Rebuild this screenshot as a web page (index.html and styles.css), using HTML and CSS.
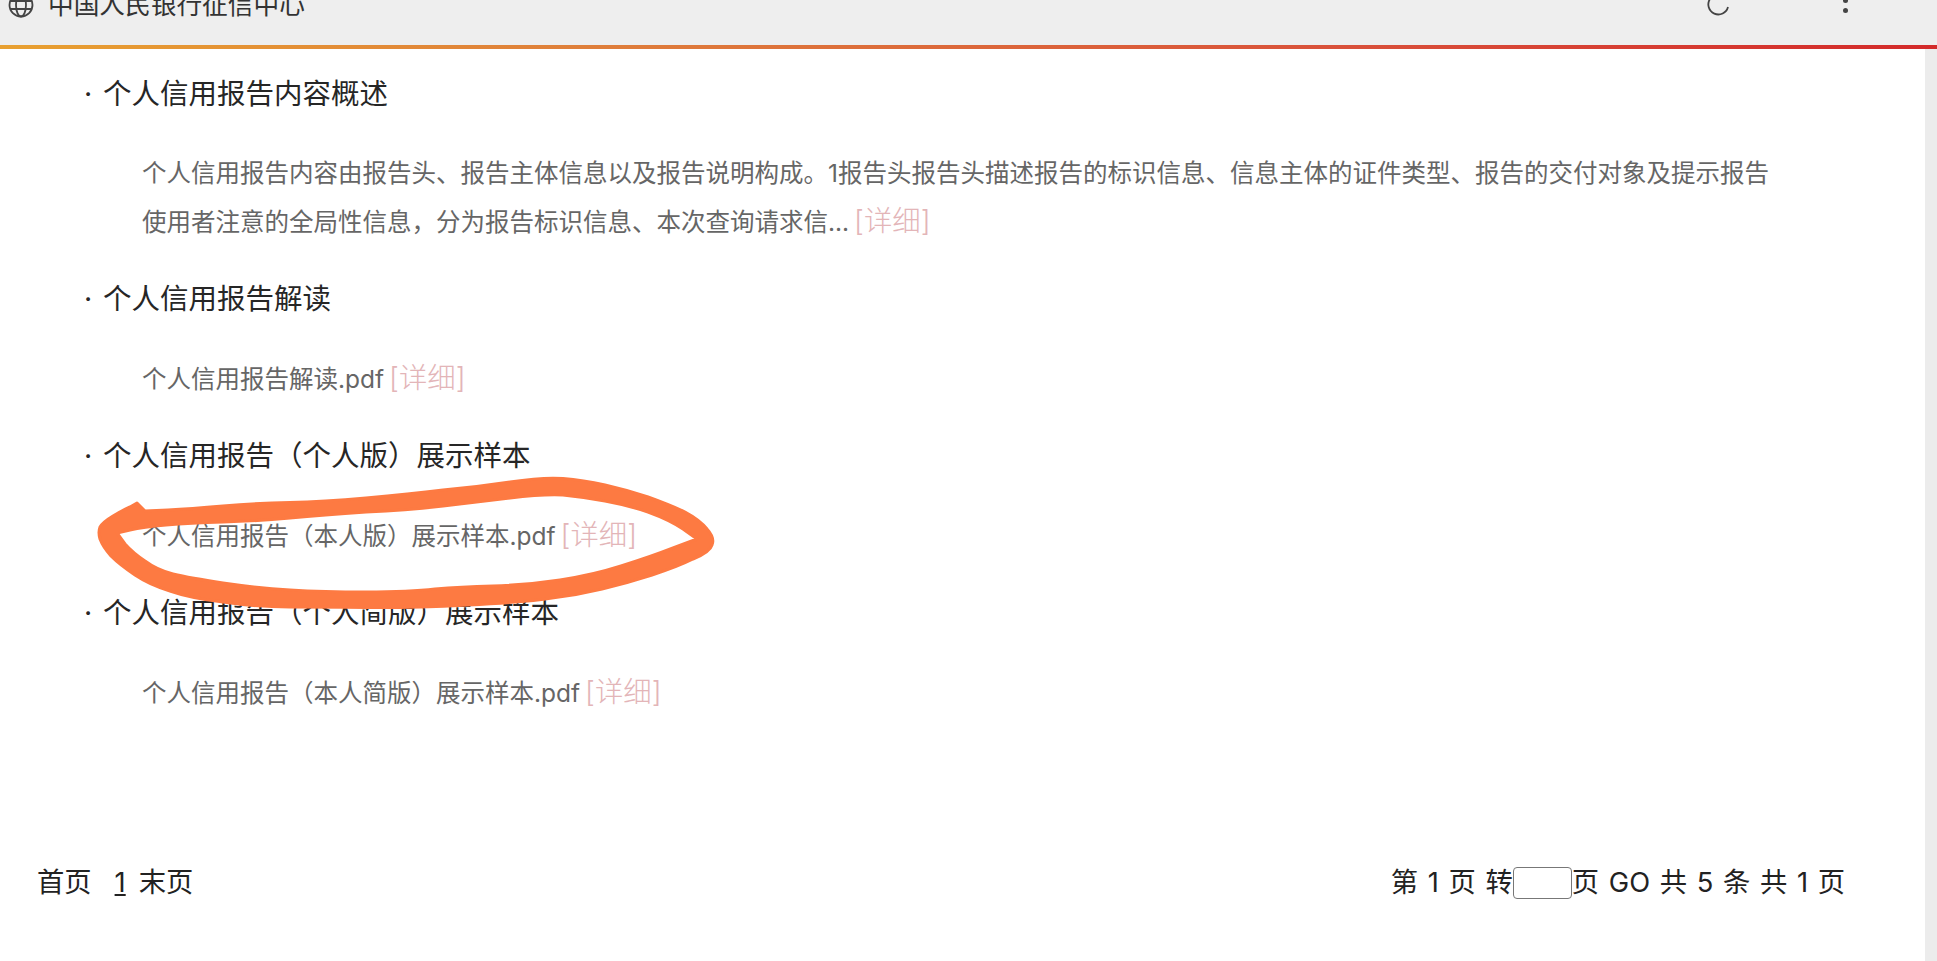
FILE: index.html
```html
<!DOCTYPE html>
<html lang="zh-CN">
<head>
    <meta charset="UTF-8">
    <title>中国人民银行征信中心</title>
    <link rel="stylesheet" href="styles.css">
</head>
<body>
    <div class="toolbar">
        <div class="toolbar-site">
            <svg class="globe" viewBox="0 0 26 26" width="26" height="26" fill="none" stroke="#444" stroke-width="1.8">
                <circle cx="13" cy="13" r="11.5"/>
                <ellipse cx="13" cy="13" rx="5" ry="11.5"/>
                <path d="M2 9h22M2 17h22"/>
            </svg>
            <span class="toolbar-title">中国人民银行征信中心</span>
        </div>
        <div class="toolbar-actions">
            <svg class="reload" viewBox="0 0 24 24" width="24" height="24" fill="none" stroke="#444" stroke-width="1.8">
                <path d="M21 14a10 10 0 1 1-3-10"/>
            </svg>
            <div class="kebab"><i></i><i></i></div>
        </div>
    </div>
    <div class="progress"></div>

    <div class="main">
        <div class="content">
            <div class="section">
                <h3 class="section-title"><span class="dot">·</span>个人信用报告内容概述</h3>
                <p class="section-text">个人信用报告内容由报告头、报告主体信息以及报告说明构成。1报告头报告头描述报告的标识信息、信息主体的证件类型、报告的交付对象及提示报告<br>使用者注意的全局性信息，分为报告标识信息、本次查询请求信... <a class="detail">[详细]</a></p>
            </div>
            <div class="section">
                <h3 class="section-title"><span class="dot">·</span>个人信用报告解读</h3>
                <p class="section-text">个人信用报告解读.pdf <a class="detail">[详细]</a></p>
            </div>
            <div class="section">
                <h3 class="section-title"><span class="dot">·</span>个人信用报告（个人版）展示样本</h3>
                <p class="section-text">个人信用报告（本人版）展示样本.pdf <a class="detail">[详细]</a></p>
            </div>
            <div class="section">
                <h3 class="section-title"><span class="dot">·</span>个人信用报告（个人简版）展示样本</h3>
                <p class="section-text">个人信用报告（本人简版）展示样本.pdf <a class="detail">[详细]</a></p>
            </div>

            <div class="pager">
                <div class="pager-left">
                    <span>首页</span>
                    <a class="pager-num">1</a>
                    <span>末页</span>
                </div>
                <div class="pager-right">
                    <span>第 1 页 转</span><input class="pager-input" type="text"><span>页 GO 共 5 条 共 1 页</span>
                </div>
            </div>
        </div>
        <div class="scrollbar"></div>
    </div>

    <!-- hand-drawn circle on top of the screenshot -->
    <svg class="scribble" viewBox="0 -10 800 210" width="800" height="210">
        <path fill="#fd7a42" stroke="#fd7a42" stroke-width="3" stroke-linejoin="round" fill-rule="evenodd" d="M57 23L65 31L88 30Q110 29 143 26Q177 23 210 22.5Q243 22 286 18Q330 14 363 10Q397 7 430 2Q463 -3 483 -1.5Q503 0 525 5Q547 10 568 17Q590 25 605 32Q620 40 627 49Q635 58 632 65Q630 72 613 79Q597 87 572 95Q547 103 522 109Q497 115 472 118Q447 122 388 125Q330 128 286 127.5Q243 127 210 127Q177 127 143 122Q110 118 90 111Q70 105 55 95Q40 85 31 76Q23 67 20 59Q18 52 20 47Q23 42 33 36Q43 30 50 27Z M37 53L50 50Q63 47 86 45Q110 43 143 42Q177 41 210 38Q243 35 286 32Q330 30 363 26Q397 22 430 18Q463 14 483 15Q503 17 525 21Q547 25 568 32Q590 40 603 49L617 59L593 68Q570 77 541 86Q513 95 480 100Q447 105 413 106Q380 107 355 109Q330 112 286 112Q243 112 210 110Q177 108 143 103Q110 98 93 94Q77 90 65 81Q53 73 45 64Z"/>
    </svg>
</body>
</html>
```

FILE: styles.css
```css
html, body {
    margin: 0;
    height: 100%;
    overflow: hidden;
}

body {
    font-family: Inter, "Noto Sans CJK SC", sans-serif;
    background-color: #fff;
    display: flex;
    flex-direction: column;
    position: relative;
}

.toolbar {
    height: 45px;
    background-color: #eeeeee;
    display: flex;
    justify-content: space-between;
    align-items: flex-start;
    overflow: hidden;
    flex-shrink: 0;
}

.toolbar-site {
    display: flex;
    align-items: center;
    gap: 14px;
    margin: -12px 0 0 8px;
    color: #333;
    font-size: 25.7px;
    line-height: 34px;
}

.toolbar-actions {
    display: flex;
    align-items: flex-start;
    gap: 112px;
    margin: -7px 89px 0 0;
}

.kebab {
    display: flex;
    flex-direction: column;
    gap: 5px;
    margin-top: 5px;
}

.kebab i {
    display: block;
    width: 5px;
    height: 5px;
    border-radius: 50%;
    background-color: #444;
}

.progress {
    height: 4px;
    flex-shrink: 0;
    background: linear-gradient(90deg, #e8a030 0%, #df7f3a 30%, #d9503a 70%, #d32a2a 100%);
}

.main {
    flex: 1;
    display: flex;
    min-height: 0;
}

.content {
    flex: 1;
    padding-top: 17px;
}

.scrollbar {
    width: 12px;
    background-color: #ececec;
}

.section {
    margin: 0 0 25px 84px;
}

.section-title {
    margin: 0 0 27px;
    font-size: 28.5px;
    line-height: 56px;
    font-weight: 400;
    color: #262626;
    display: flex;
}

.dot {
    width: 19px;
}

.section-text {
    margin: 0 0 0 58px;
    font-size: 24.5px;
    line-height: 48px;
    color: #666;
}

.detail {
    margin-left: -2px;
    color: #e3b5b8;
    font-size: 28.4px;
    font-weight: 300;
}

.pager {
    display: flex;
    justify-content: space-between;
    margin: 146px 80px 0 37px;
    font-size: 27.3px;
    line-height: 40px;
    color: #222;
    word-spacing: 2px;
}

.pager-left {
    display: flex;
    gap: 13px;
}

.pager-num {
    margin-left: 10px;
    text-decoration: underline;
}

.pager-right {
    display: flex;
    align-items: center;
}

.pager-input {
    width: 59px;
    height: 32px;
    box-sizing: border-box;
    border: 1px solid #777;
    border-radius: 4px;
    background: #fff;
    padding: 0;
}

.scribble {
    position: absolute;
    left: 80px;
    top: 470px;
}
```
